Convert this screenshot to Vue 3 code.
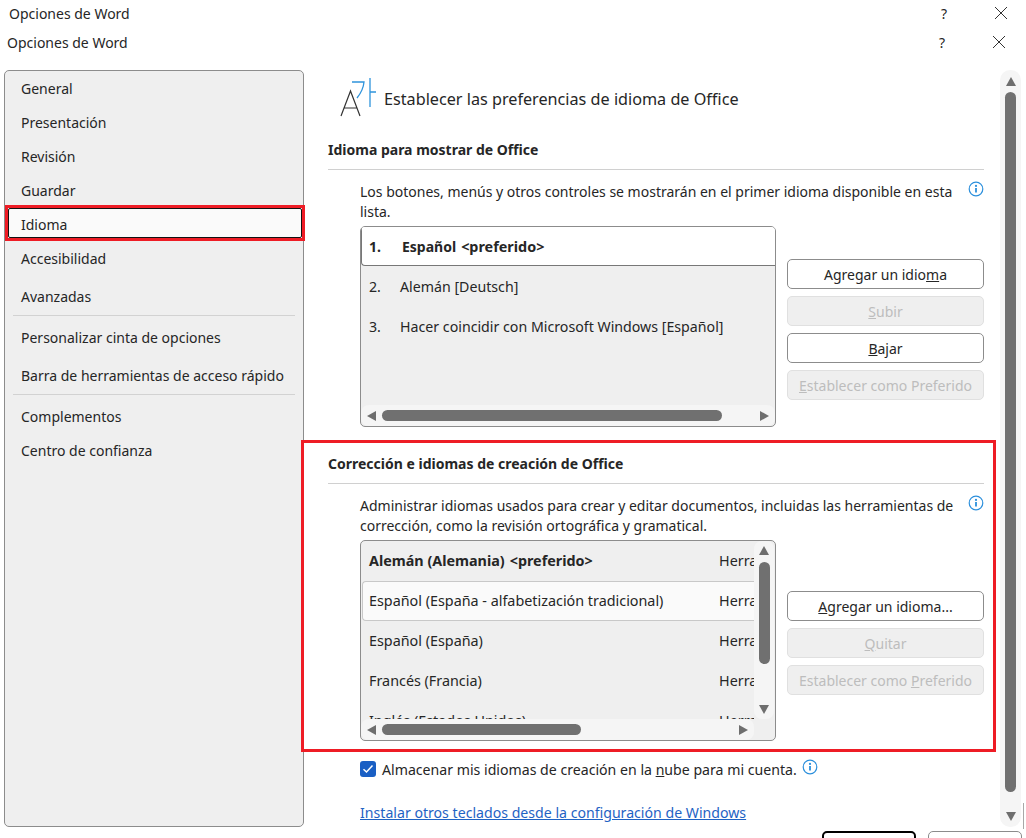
<script setup>
const navGroups = [
  [
    { label: 'General', h: 34, pt: 7 },
    { label: 'Presentación', h: 34, pt: 7 },
    { label: 'Revisión', h: 34, pt: 7 },
    { label: 'Guardar', h: 34, pt: 7 },
    { label: 'Idioma', h: 34, pt: 7, active: true },
    { label: 'Accesibilidad', h: 34, pt: 7 },
    { label: 'Avanzadas', h: 39, pt: 11 },
  ],
  [
    { label: 'Personalizar cinta de opciones', h: 39, pt: 12 },
    { label: 'Barra de herramientas de acceso rápido', h: 39, pt: 11 },
  ],
  [
    { label: 'Complementos', h: 34, pt: 12 },
    { label: 'Centro de confianza', h: 34, pt: 12 },
  ],
]
const authoring = [
  { name: 'Alemán (Alemania)', pref: true },
  { name: 'Español (España - alfabetización tradicional)', sel: true },
  { name: 'Español (España)' },
  { name: 'Francés (Francia)' },
  { name: 'Inglés (Estados Unidos)' },
]
</script>

<template>
  <div class="window">
    <div class="title first"><span>Opciones de Word</span><span class="help">?</span>
      <svg class="close" width="14" height="14" viewBox="0 0 14 14"><path d="M1 1l12 12M13 1L1 13" /></svg>
    </div>
    <div class="title second"><span>Opciones de Word</span><span class="help">?</span>
      <svg class="close" width="14" height="14" viewBox="0 0 14 14"><path d="M1 1l12 12M13 1L1 13" /></svg>
    </div>

    <div class="body">
      <nav class="sidebar">
        <template v-for="(group, g) in navGroups" :key="g">
          <div v-if="g" class="nav-sep"></div>
          <div v-for="item in group" :key="item.label" class="nav-item" :style="{ height: item.h + 'px', paddingTop: item.pt + 'px' }">
            <div v-if="item.active" class="nav-mark"></div>
            <span>{{ item.label }}</span>
          </div>
        </template>
      </nav>

      <main class="content">
        <header class="page-head">
          <svg class="lang-icon" width="37" height="40" viewBox="0 0 37 40" fill="none">
            <path d="M1 38L10.5 13L20 38M4.2 30H16.8" stroke="#333" stroke-width="1.2" />
            <path d="M12 4H24C23.5 10 21 15 17 20" stroke="#2f94dc" stroke-width="1.3" />
            <path d="M30 0V29M30 14H36" stroke="#2f94dc" stroke-width="1.3" />
          </svg>
          <span>Establecer las preferencias de idioma de Office</span>
        </header>

        <section class="display-section">
          <h2>Idioma para mostrar de Office</h2>
          <div class="intro">
            <p>Los botones, menús y otros controles se mostrarán en el primer idioma disponible en esta lista.</p>
            <svg class="info" width="16" height="16" viewBox="0 0 16 16"><circle cx="8" cy="8" r="6.8" fill="none" stroke="#2b8fdc" stroke-width="1.2" /><circle cx="8" cy="4.9" r="1.1" fill="#2b8fdc" /><path d="M8 7v4.6" stroke="#2b8fdc" stroke-width="1.8" /></svg>
          </div>
          <div class="list-row">
            <div class="listbox">
              <div class="rows">
                <div class="drow current"><span class="num">1.</span><b class="dname">Español</b><b class="dpref">&lt;preferido&gt;</b></div>
                <div class="drow"><span class="num">2.</span><span>Alemán [Deutsch]</span></div>
                <div class="drow"><span class="num">3.</span><span>Hacer coincidir con Microsoft Windows [Español]</span></div>
              </div>
              <div class="hbar">
                <i class="arrow left"></i><div class="track"><div class="thumb thumb-a"></div></div><i class="arrow right"></i>
              </div>
            </div>
            <div class="buttons first-set">
              <button class="btn">Agregar un idio<u>m</u>a</button>
              <button class="btn off"><u>S</u>ubir</button>
              <button class="btn"><u>B</u>ajar</button>
              <button class="btn off"><u>E</u>stablecer como Preferido</button>
            </div>
          </div>
        </section>

        <section class="authoring-section">
          <h2>Corrección e idiomas de creación de Office</h2>
          <div class="intro">
            <p>Administrar idiomas usados para crear y editar documentos, incluidas las herramientas de corrección, como la revisión ortográfica y gramatical.</p>
            <svg class="info" width="16" height="16" viewBox="0 0 16 16"><circle cx="8" cy="8" r="6.8" fill="none" stroke="#2b8fdc" stroke-width="1.2" /><circle cx="8" cy="4.9" r="1.1" fill="#2b8fdc" /><path d="M8 7v4.6" stroke="#2b8fdc" stroke-width="1.8" /></svg>
          </div>
          <div class="list-row">
            <div class="listbox grid">
              <div class="arows">
                <div v-for="row in authoring" :key="row.name" class="arow" :class="{ sel: row.sel }">
                  <span class="aname"><b v-if="row.pref">{{ row.name }}<span class="pref">&lt;preferido&gt;</span></b><template v-else>{{ row.name }}</template></span>
                  <span class="atool">Herramientas</span>
                </div>
              </div>
              <div class="vbar">
                <i class="arrow up"></i><div class="vtrack"><div class="vthumb"></div></div><i class="arrow down"></i>
              </div>
              <div class="hbar">
                <i class="arrow left"></i><div class="track"><div class="thumb thumb-b"></div></div><i class="arrow right"></i>
              </div>
            </div>
            <div class="buttons second-set">
              <button class="btn"><u>A</u>gregar un idioma...</button>
              <button class="btn off"><u>Q</u>uitar</button>
              <button class="btn off">Establecer como <u>P</u>referido</button>
            </div>
          </div>
        </section>

        <label class="check-row">
          <span class="checkbox"><svg width="12" height="10" viewBox="0 0 12 10"><path d="M1.5 5.2L4.5 8L10.5 1.5" fill="none" stroke="#fff" stroke-width="1.5" /></svg></span>
          <span>Almacenar mis idiomas de creación en la <u>n</u>ube para mi cuenta.</span>
          <svg class="info inline" width="16" height="16" viewBox="0 0 16 16"><circle cx="8" cy="8" r="6.8" fill="none" stroke="#2b8fdc" stroke-width="1.2" /><circle cx="8" cy="4.9" r="1.1" fill="#2b8fdc" /><path d="M8 7v4.6" stroke="#2b8fdc" stroke-width="1.8" /></svg>
        </label>
        <a class="link">Instalar otros teclados desde la configuración de Windows</a>
      </main>

      <div class="page-scroll">
        <i class="arrow up"></i><div class="page-track"><div class="page-thumb"></div></div><i class="arrow down"></i>
      </div>
    </div>

    <footer class="footer">
      <div class="foot-btn primary"></div>
      <div class="foot-btn"></div>
    </footer>

    <div class="red-box"></div>
    <div class="edge"></div>
  </div>
</template>

<style>
html, body { margin: 0; background: #fff; overflow: hidden; }
</style>

<style scoped>
.window {
  position: relative;
  width: 1026px;
  height: 838px;
  overflow: hidden;
  background: #fff;
  color: #262626;
  font-family: "Noto Sans", "Open Sans", sans-serif;
  font-size: 14px;
}
.title { display: flex; align-items: center; box-sizing: border-box; }
.title.first { height: 28px; padding-left: 9px; padding-bottom: 2px; }
.title.second { height: 30px; padding-left: 7px; padding-bottom: 2px; }
.title .help { margin-left: auto; margin-right: 47px; }
.close { fill: none; stroke: #333; stroke-width: 1; }
.title.first .close { margin-right: 18px; }
.title.second .close { margin-right: 20px; }

.body { display: flex; height: 757px; margin-top: 12px; }

.sidebar {
  box-sizing: border-box;
  width: 300px;
  margin-left: 4px;
  padding: 1px 3px;
  background: #efefef;
  border: 1px solid #8c8c8c;
  border-radius: 5px;
}
.nav-item { box-sizing: border-box; padding-left: 13px; position: relative; line-height: 20px; }
.nav-item span { position: relative; }
.nav-mark {
  position: absolute;
  inset: -3px -5px 1px -3px;
  box-sizing: border-box;
  background: #fafafa;
  border: 3px solid #ee1c25;
}
.nav-mark::before {
  content: "";
  position: absolute;
  inset: 0;
  border: 1px solid #111;
  border-radius: 2px;
}
.nav-sep { height: 1px; margin: 0 5px; background: #d2d2d2; }

.content { width: 656px; margin-left: 24px; }
.page-head { display: flex; align-items: flex-start; height: 54px; margin-left: 12px; }
.page-head span { margin-left: 7px; margin-top: 17px; font-size: 16.2px; line-height: 24px; white-space: nowrap; }
.lang-icon { margin-top: 8px; flex: none; }

h2 {
  margin: 0;
  padding-bottom: 8px;
  height: 24px;
  line-height: 26px;
  font-size: 14px;
  font-weight: 700;
  border-bottom: 1px solid #d0d0d0;
}
.display-section { margin-top: 13px; }
.authoring-section { margin-top: 24px; }

.intro { display: flex; padding-left: 32px; margin-top: 12px; }
.intro p { margin: 0; width: 600px; line-height: 20px; }
.info { flex: none; }
.intro .info { margin-left: 9px; margin-top: -1px; }

.list-row { display: flex; margin-top: 4px; }
.listbox {
  box-sizing: border-box;
  width: 416px;
  height: 201px;
  margin-left: 32px;
  display: flex;
  flex-direction: column;
  background: #efefef;
  border: 1px solid #8c8c8c;
  border-radius: 5px;
  overflow: hidden;
}
.rows { flex: 1; font-size: 14.2px; }
.drow { display: flex; align-items: center; box-sizing: border-box; height: 40px; padding-left: 8px; }
.num { width: 31px; }
.drow.current {
  font-size: 14px;
  height: 39px;
  background: #fff;
  border-bottom: 1px solid #777;
  border-left: 1px solid #777;
  border-radius: 0 0 0 4px;
  padding-left: 7px;
}
.drow.current .num { width: 33px; font-weight: 700; }
.dname { margin-right: 5px; }
.dpref { font-size: 14.4px; }
.hbar { display: flex; align-items: center; height: 21px; background: #f5f5f5; flex: none; padding: 0 6px; gap: 6px; border-radius: 8px; }
.track { flex: 1; }
.thumb { height: 11px; border-radius: 6px; background: #707070; }
.thumb-a { width: 340px; }
.thumb-b { width: 199px; }

.listbox.grid { display: grid; grid-template-columns: 393px 1fr; grid-template-rows: 178px 1fr; }
.arows { overflow: hidden; padding-left: 1px; font-size: 14.35px; }
.arow { display: flex; align-items: center; box-sizing: border-box; height: 40px; padding: 0 0 2px 7px; white-space: nowrap; overflow: hidden; }
.arow.sel { background: #fafafa; border: 1px solid #c8c8c8; border-right: 0; border-radius: 4px 0 0 4px; padding-left: 6px; padding-bottom: 2px; }
.aname { width: 350px; flex: none; }
.pref { margin-left: 5px; }
.vbar { grid-row: 1 / span 2; display: flex; flex-direction: column; align-items: center; width: 20px; height: 178px; background: #f5f5f5; border-radius: 8px; padding: 5px 0; box-sizing: border-box; }
.vtrack { flex: 1; padding-top: 7px; }
.vthumb { width: 11px; height: 102px; border-radius: 6px; background: #707070; }
.listbox.grid .hbar { grid-column: 1; grid-row: 2; }

.arrow { display: block; width: 0; height: 0; flex: none; border-style: solid; border-color: transparent; }
.arrow.left { border-width: 5.5px 9px 5.5px 0; border-right-color: #6e6e6e; }
.arrow.right { border-width: 5.5px 0 5.5px 9px; border-left-color: #6e6e6e; }
.arrow.up { border-width: 0 5.5px 9px; border-bottom-color: #6e6e6e; }
.arrow.down { border-width: 9px 5.5px 0; border-top-color: #6e6e6e; }

.buttons { display: flex; flex-direction: column; gap: 7px; margin-left: 11px; width: 197px; }
.first-set { padding-top: 33px; }
.second-set { padding-top: 51px; }
.btn {
  box-sizing: border-box;
  height: 30px;
  width: 197px;
  padding: 0;
  background: #fff;
  border: 1px solid #8c8c8c;
  border-radius: 5px;
  color: #262626;
  font: inherit;
}
.btn.off { background: #efefef; border-color: #e0e0e0; color: #bdbdbd; }

.check-row { display: flex; align-items: center; height: 20px; margin: 18px 0 0 32px; font-size: 14.13px; }
.checkbox { display: flex; align-items: center; justify-content: center; width: 16px; height: 16px; background: #1a5fc4; border-radius: 3px; margin-right: 6px; }
.info.inline { margin-left: 5px; margin-top: -4px; }
.link { display: block; margin: 24px 0 0 32px; color: #1f63c4; text-decoration: underline; line-height: 20px; font-size: 14.13px; }

.page-scroll {
  box-sizing: border-box;
  display: flex;
  flex-direction: column;
  align-items: center;
  width: 21px;
  margin-left: 16px;
  padding: 7px 0 6px;
  background: #f5f5f5;
  border-radius: 10px;
}
.page-track { flex: 1; padding-top: 6px; }
.page-thumb { width: 11px; height: 700px; border-radius: 6px; background: #707070; }

.footer { display: flex; gap: 12px; justify-content: flex-end; margin-top: 4px; padding-right: 4px; }
.foot-btn { box-sizing: border-box; width: 94px; height: 30px; border: 1px solid #8c8c8c; border-radius: 5px; }
.foot-btn.primary { border: 2px solid #000; }

.red-box {
  position: absolute;
  left: 301px;
  top: 440px;
  width: 695px;
  height: 312px;
  box-sizing: border-box;
  border: 3px solid #ee1c25;
  pointer-events: none;
}
.edge { position: absolute; left: 1023px; top: 803px; width: 1px; height: 26px; background: #a8a8a8; }
</style>
